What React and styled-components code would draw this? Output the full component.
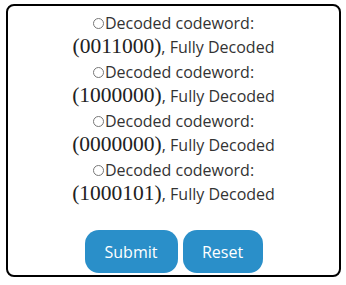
import React from 'react';
import styled, { createGlobalStyle } from 'styled-components';

const GlobalStyle = createGlobalStyle`
    body {
        margin: 0;
        background: #fff;
        font-family: "Open Sans", "Noto Sans", sans-serif;
    }
`;

const Panel = styled.div`
    box-sizing: border-box;
    margin: 4px 0 0 6px;
    width: 335px;
    height: 273px;
    border: 2px solid #000;
    border-radius: 8px;
    display: flex;
    flex-direction: column;
    align-items: center;
    padding-top: 5px;
`;

const ResultList = styled.div`
    display: flex;
    flex-direction: column;
    align-items: center;
`;

const Label = styled.label`
    display: flex;
    align-items: center;
    height: 24px;
    line-height: 24px;
    font-size: 16px;
    color: #333;
`;

const Radio = styled.span`
    box-sizing: border-box;
    width: 11px;
    height: 11px;
    border: 1px solid #777;
    border-radius: 50%;
    margin-right: 1px;
`;

const CodeLine = styled.div`
    height: 25px;
    line-height: 25px;
    color: #333;
    font-size: 16px;
    white-space: nowrap;
`;

const Codeword = styled.span`
    font-family: "Liberation Serif", "Times New Roman", serif;
    font-size: 21.5px;
    line-height: 20px;
    color: #222;
`;

const Actions = styled.div`
    display: flex;
    gap: 5px;
    margin-top: 23px;
`;

const Button = styled.button`
    height: 43px;
    width: ${p => p.$w}px;
    padding: 0;
    border: none;
    border-radius: 14px;
    background: #2a8fc9;
    color: #fff;
    font-family: "Open Sans", "Noto Sans", sans-serif;
    font-size: 16px;
`;

const results = ['0011000', '1000000', '0000000', '1000101'];

export default function App() {
    return (
        <>
            <GlobalStyle />
            <Panel>
                <ResultList>
                    {results.map(code => (
                        <React.Fragment key={code}>
                            <Label>
                                <Radio />
                                Decoded codeword:
                            </Label>
                            <CodeLine>
                                <Codeword>({code})</Codeword>, Fully Decoded
                            </CodeLine>
                        </React.Fragment>
                    ))}
                </ResultList>
                <Actions>
                    <Button $w={93}>Submit</Button>
                    <Button $w={80}>Reset</Button>
                </Actions>
            </Panel>
        </>
    );
}
